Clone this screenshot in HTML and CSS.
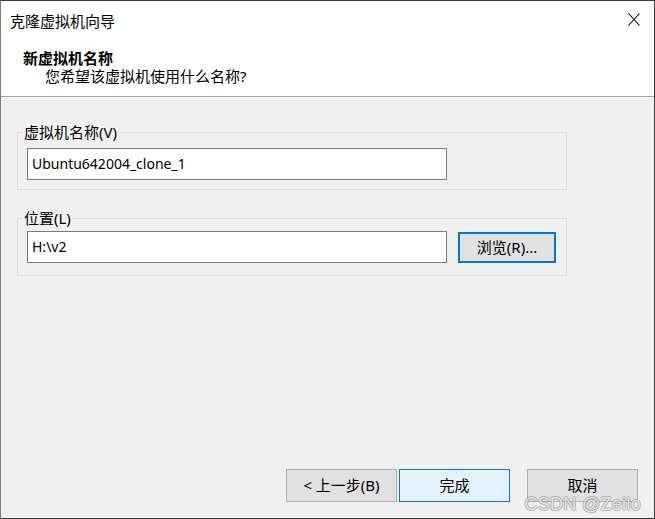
FILE: index.html
```html
<!DOCTYPE html>
<html lang="zh-CN">
<head>
<meta charset="utf-8">
<title>克隆虚拟机向导</title>
<link rel="stylesheet" href="styles.css">
</head>
<body>
<div class="window">
  <header class="header">
    <div class="titlebar">
      <span class="title">克隆虚拟机向导</span>
      <svg class="close" width="12" height="13" viewBox="0 0 12 13" aria-label="关闭">
        <path d="M0.5 0.5 L11.5 12.5 M11.5 0.5 L0.5 12.5" stroke="#000" stroke-width="1.1" fill="none"/>
      </svg>
    </div>
    <div class="heading">新虚拟机名称</div>
    <div class="subheading">您希望该虚拟机使用什么名称?</div>
  </header>
  <main class="content">
    <fieldset class="group group-name">
      <legend class="legend">虚拟机名称(V)</legend>
      <div class="field">Ubuntu642004_clone_1</div>
    </fieldset>
    <fieldset class="group group-path">
      <legend class="legend">位置(L)</legend>
      <div class="row">
        <div class="field">H:\v2</div>
        <button class="btn btn-browse">浏览(R)...</button>
      </div>
    </fieldset>
  </main>
  <footer class="footer">
    <button class="btn btn-nav">&lt; 上一步(B)</button>
    <button class="btn btn-nav btn-primary">完成</button>
    <button class="btn btn-nav btn-cancel">取消</button>
  </footer>
  <div class="watermark">CSDN @Zeilo</div>
</div>
</body>
</html>
```

FILE: styles.css
```css
* { box-sizing: border-box; }
html, body { margin: 0; padding: 0; background: #f0f0f0; }
body {
  font-family: "Segoe UI", "Noto Sans", "Noto Sans CJK SC", sans-serif;
  font-size: 15px;
  color: #000;
}
.window {
  width: 655px;
  height: 519px;
  border: 1px solid #3c3c3c;
  border-left-color: #7a7a7a;
  background: #f0f0f0;
  display: flex;
  flex-direction: column;
  position: relative;
  overflow: hidden;
}
.header {
  background: #fff;
  height: 96px;
  border-bottom: 1px solid #a0a0a0;
  box-shadow: 0 1px 0 #fff;
}
.titlebar {
  display: flex;
  justify-content: space-between;
  align-items: center;
  padding: 9px 14px 0 9px;
  height: 30px;
}
.title { line-height: 20px; }
.close { display: block; margin-top: -2px; }
.heading {
  font-weight: bold;
  line-height: 18px;
  padding-left: 22px;
  margin-top: 18px;
}
.subheading {
  line-height: 18px;
  padding-left: 44px;
}
.content {
  flex: 1;
  padding: 24px 0 0 16px;
  display: flex;
  flex-direction: column;
  gap: 18px;
  margin-top: 1px;
}
.group {
  width: 550px;
  margin: 0;
  border: 1px solid #dcdcdc;
  padding: 6px 0 9px 9px;
}
.group-path { padding-top: 3px; padding-bottom: 12px; }
.legend {
  padding: 0 1px;
  margin-left: -4px;
  line-height: 20px;
}
.field {
  width: 420px;
  height: 32px;
  background: #fff;
  border: 1px solid #7a7a7a;
  padding-left: 4px;
  line-height: 29px;
  font-size: 14px;
  white-space: nowrap;
}
.row {
  display: flex;
  align-items: flex-start;
  gap: 11px;
}
.btn {
  font: inherit;
  color: #000;
  background: #e1e1e1;
  border: 1px solid #adadad;
  padding: 0;
  margin: 0;
  line-height: 1;
}
.btn-browse {
  width: 98px;
  height: 31px;
  margin-top: 1px;
  border: 2px solid #0078d7;
}
.footer {
  display: flex;
  justify-content: flex-end;
  padding: 0 16px 16px 0;
  gap: 2px;
}
.btn-nav { width: 111px; height: 33px; }
.btn-primary { background: #e5f1fb; border-color: #0078d7; }
.btn-cancel { margin-left: 15px; }
.watermark {
  position: absolute;
  right: 13px;
  bottom: 3px;
  font-family: "Liberation Sans", sans-serif;
  font-size: 18px;
  color: rgba(255, 255, 255, 0.75);
  text-shadow: 1px 0 0 rgba(140, 140, 140, 0.55), -1px 0 0 rgba(140, 140, 140, 0.55), 0 1px 0 rgba(140, 140, 140, 0.55), 0 -1px 0 rgba(140, 140, 140, 0.55);
  letter-spacing: 0.3px;
  pointer-events: none;
}
```
